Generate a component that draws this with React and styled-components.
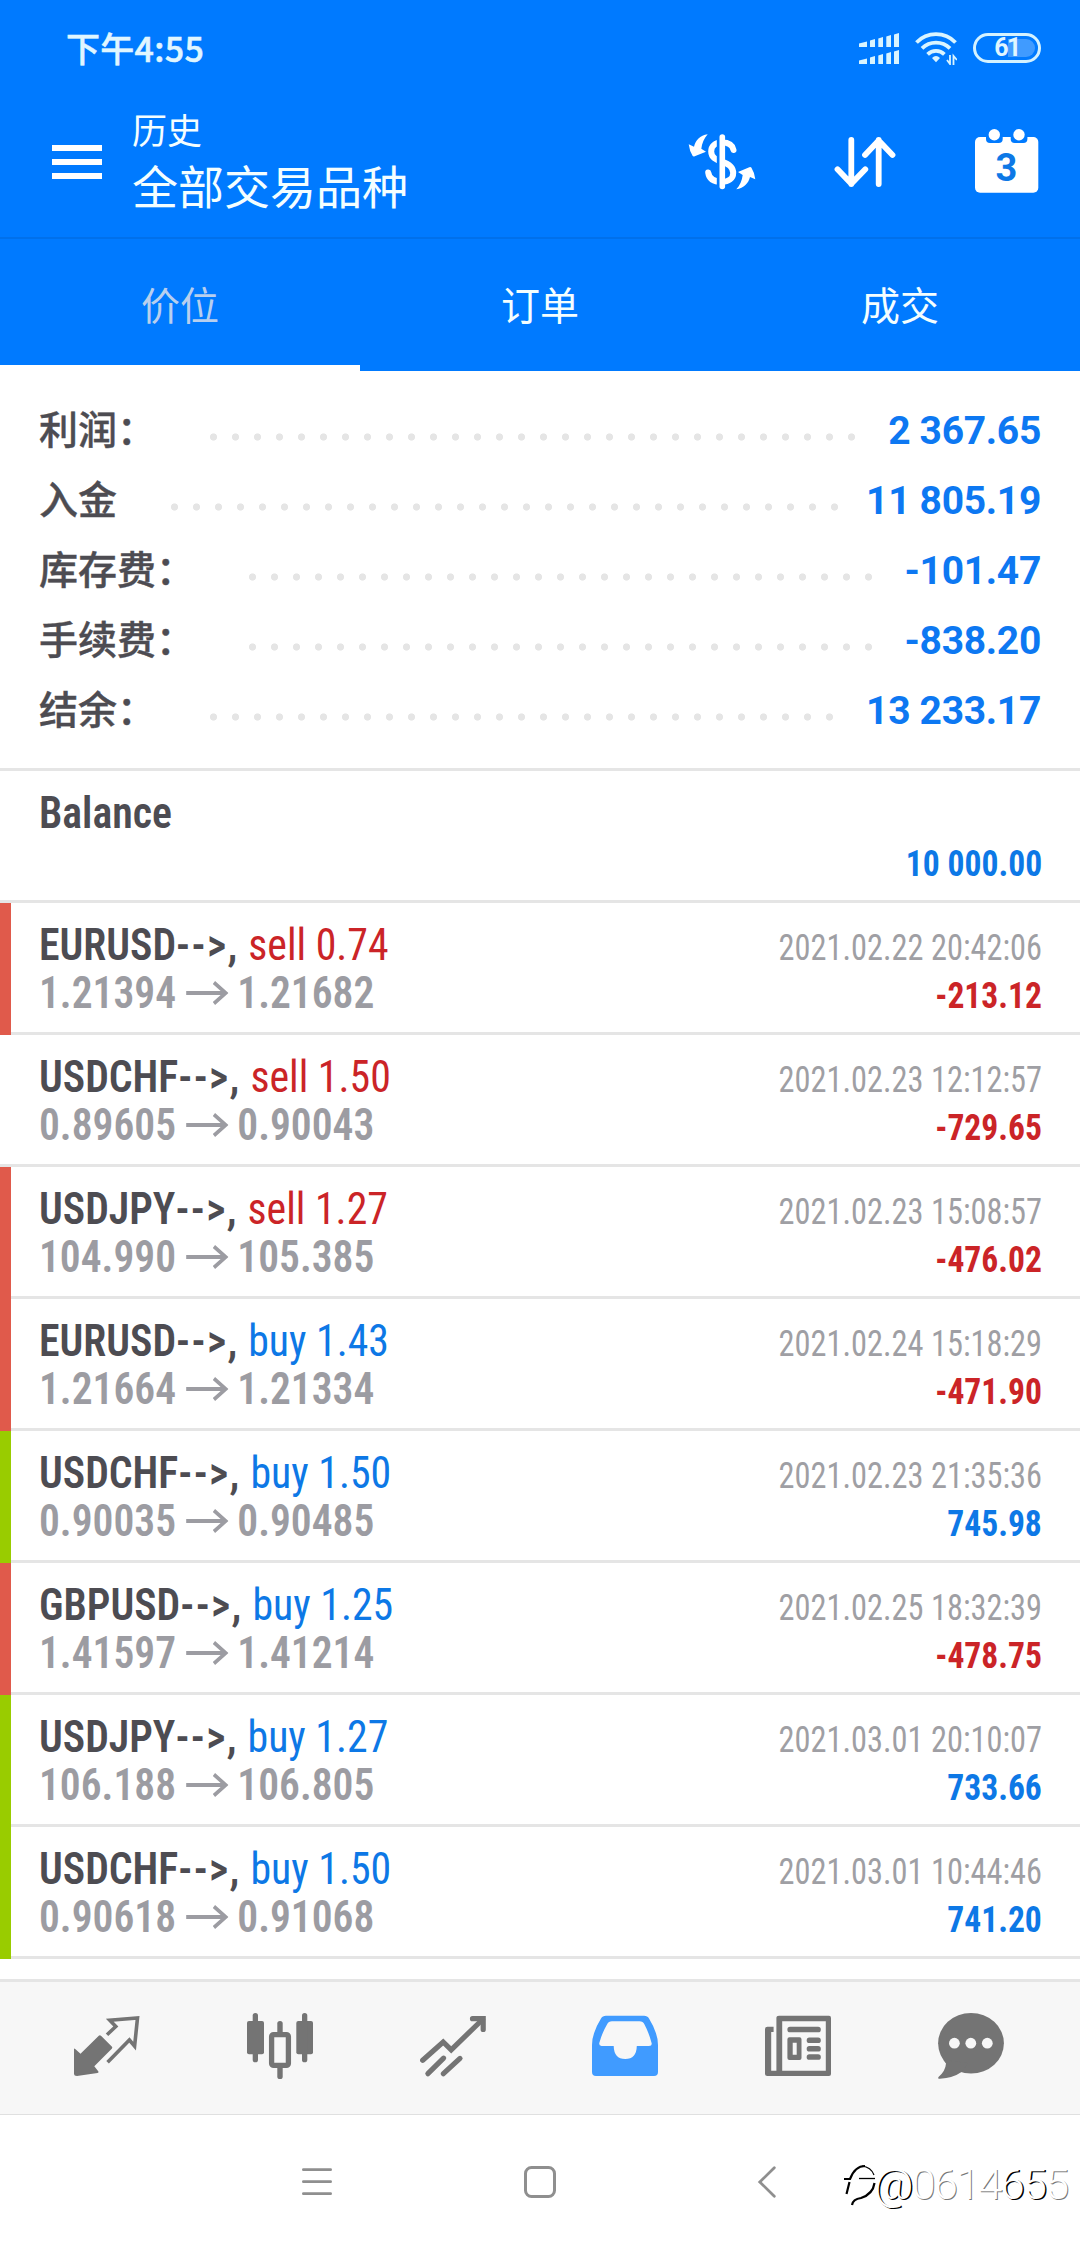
import React from 'react';
import styled, { createGlobalStyle } from 'styled-components';

const GlobalStyle = createGlobalStyle`
  * {
    box-sizing: border-box;
  }

  body {
    margin: 0;
    background: #fff;
    font-family: Roboto, 'Noto Sans CJK SC', sans-serif;
  }

  svg {
    display: block;
    flex-shrink: 0;
  }
`;

const Screen = styled.div`
  position: relative;
  display: flex;
  flex-direction: column;
  width: 1080px;
  height: 2244px;
  overflow: hidden;
  background: #fff;
`;

const StatusBar = styled.div`
  display: flex;
  align-items: center;
  height: 96px;
  padding: 0 39px 0 66px;
  background: #007aff;
`;

const Clock = styled.span`
  flex: 1;
  font: 500 34px/40px 'Noto Sans CJK SC', sans-serif;
  letter-spacing: 0.3px;
  color: #e0f6ff;
  -webkit-text-stroke: 0.5px #e0f6ff;
`;

const StatusIcons = styled.div`
  display: flex;
  align-items: center;
  gap: 16px;
`;

const Battery = styled.div`
  display: flex;
  align-items: center;
  justify-content: center;
  width: 68px;
  height: 30px;
  border: 3px solid #d4f2ff;
  border-radius: 15px;
  background: linear-gradient(90deg, transparent 52%, #409bff 52%) content-box;
  padding: 3px;
  overflow: hidden;
  font: 700 25px/24px Roboto, sans-serif;
  letter-spacing: -1.5px;
  color: #e0f6ff;
`;

const TitleBar = styled.header`
  display: flex;
  align-items: center;
  height: 143px;
  padding: 0 38px 14px 52px;
  border-bottom: 2px solid #0070eb;
  background: #007aff;
`;

const Titles = styled.div`
  flex: 1;
  padding: 2px 0 0 30px;
  font-family: 'Noto Sans CJK SC', sans-serif;
  color: #f4feff;
`;

const Caption = styled.div`
  font-size: 35px;
  line-height: 48px;
`;

const Title = styled.div`
  font-size: 46px;
  line-height: 63px;
`;

const Actions = styled.div`
  display: flex;
  gap: 71px;
`;

const Tabs = styled.nav`
  display: grid;
  grid-template-columns: repeat(3, 1fr);
  height: 132px;
  background: #007aff;
`;

const Tab = styled.div`
  display: flex;
  align-items: center;
  justify-content: center;
  border-bottom: 6px solid ${p => (p.$active ? '#fff' : '#007aff')};
  padding-top: 2px;
  font: 400 39px/56px 'Noto Sans CJK SC', sans-serif;
  color: ${p => (p.$active ? '#b8cfee' : '#f4feff')};
`;

const Summary = styled.section`
  height: 400px;
  padding: 23px 39px 0;
  border-bottom: 3px solid #e5e5e5;
`;

const SummaryRow = styled.div`
  display: flex;
  align-items: center;
  height: 70px;
`;

const SummaryLabel = styled.span`
  padding-bottom: 4px;
  font: 500 39px/56px 'Noto Sans CJK SC', sans-serif;
  color: #4d4c52;
  -webkit-text-stroke: 0.4px #4d4c52;
`;

const Dots = styled.span`
  width: ${p => p.$count * 22}px;
  height: 8px;
  margin: 16px 0 0 54px;
  background: radial-gradient(circle at 3.5px 4px, #e5e5e5 3.2px, transparent 4px) 0 0 / 22px 8px repeat-x;
`;

const SummaryValue = styled.span`
  margin-left: auto;
  padding-top: 3px;
  font: 700 39px/56px Roboto, sans-serif;
  letter-spacing: -0.3px;
  color: #0d78f2;
`;

const Deal = styled.article`
  display: flex;
  justify-content: space-between;
  height: 132px;
  padding: 18px 38px 0 28px;
  border-left: 11px solid ${p => p.$strip || 'transparent'};
  background: linear-gradient(#e5e5e5, #e5e5e5) 0 100% / 100% 3px no-repeat border-box;
  font-family: 'Roboto Condensed', Roboto, sans-serif;
  font-stretch: condensed;
  line-height: 48px;
  white-space: nowrap;
`;

const Column = styled.div`
  display: flex;
  flex-direction: column;
  align-items: ${p => (p.$right ? 'flex-end' : 'flex-start')};
  padding-top: ${p => (p.$right ? '3px' : 0)};
`;

const Symbol = styled.div`
  font-size: 44px;
  font-weight: 600;
  color: #4d4c52;
  transform: scaleX(0.95);
  transform-origin: left;
`;

const Suffix = styled.span`
  letter-spacing: 1.5px;
`;

const Action = styled.span`
  font-weight: 400;
  color: ${p => (p.$sell ? '#cb2427' : '#0d78e6')};
`;

const Prices = styled.div`
  display: flex;
  align-items: center;
  font-size: 44px;
  font-weight: 600;
  color: #9c9ca2;
  transform: scaleX(0.943);
  transform-origin: left;

  svg {
    margin: 0 9px 0 11px;
  }
`;

const DateTime = styled.div`
  min-height: 48px;
  font-size: 36.5px;
  font-weight: 400;
  color: #9f9fa4;
  transform: scaleX(0.887);
  transform-origin: right;
`;

const Profit = styled.div`
  font-size: 36.5px;
  font-weight: 700;
  color: ${p => (p.$loss ? '#cb2427' : '#0d78e6')};
  transform: scaleX(0.92);
  transform-origin: right;
`;

const NavBar = styled.nav`
  display: flex;
  justify-content: space-around;
  height: 136px;
  margin-top: 20px;
  padding: 31px 23px 0 21px;
  border-top: 3px solid #e5e5e5;
  border-bottom: 1px solid #e0e0e0;
  background: #f7f7f7;
  color: #747474;
`;

const SystemBar = styled.div`
  display: flex;
  align-items: center;
  gap: 191px;
  flex: 1;
  padding: 5px 0 0 301px;
  color: #8f8f8f;
`;

const Watermark = styled.div`
  position: absolute;
  left: 843px;
  top: 2158px;
  display: flex;
  align-items: center;
  font: 300 43px/52px Roboto, sans-serif;
  letter-spacing: -1.6px;
  color: #fff;

  svg {
    margin-right: -6px;
  }
`;

const Mark = styled.span`
  text-shadow: ${p => (p.$dark ? '1.5px 1px 0.5px #000' : '1px 1px 0.5px #777')};
`;

const MenuIcon = () => (
  <svg width="50" height="38" viewBox="0 -4 50 38" fill="#fff">
    <rect width="50" height="6" />
    <rect y="14" width="50" height="6" />
    <rect y="28" width="50" height="6" />
  </svg>
);

const SignalIcon = () => (
  <svg width="40" height="31" viewBox="0 0 40 31" fill="#d9f4ff">
    {[0, 17].map(y => (
      <path
        key={y}
        transform={`translate(0 ${y})`}
        d="M0 10.5L8 8.5V14H0ZM11 7.5L16 6V14H11ZM19.3 5.5L24 4V14H19.3ZM27.3 3.5L32 2V14H27.3ZM35 1.5L40 0V14H35Z"
      />
    ))}
  </svg>
);

const WifiIcon = () => (
  <svg width="42" height="33" viewBox="0 0 42 33" fill="none" stroke="#d9f4ff" strokeWidth="3.8">
    <path d="M1.5 10.5A27 27 0 0 1 40.5 10.5" />
    <path d="M7 16.3A20 20 0 0 1 35 16.3" />
    <path d="M12.6 22.3A12 12 0 0 1 29.4 22.3" />
    <path d="M17 26Q21 22 25 26L21 30.3Z" fill="#d9f4ff" stroke="none" />
    <path d="M35 23V32L32 28M38.5 33V24L42 28" strokeWidth="1.8" />
  </svg>
);

const DollarIcon = () => (
  <svg width="72" height="72" viewBox="0 0 72 72" fill="#fff">
    <path
      d="M49.5 26C48.5 21 44 18.6 38 18.6C31 18.6 27.2 22 27.2 27.5C27.2 33.5 32 35.7 38 37.7C46 40.3 49.2 43.5 49.2 49C49.2 54.5 44.5 57.8 38 57.8C30 57.8 25 54.5 24.2 48.5"
      fill="none"
      stroke="#fff"
      strokeWidth="6"
      strokeLinecap="round"
    />
    <path d="M32.8 12H36V64H32.8Z" fill="#007aff" />
    <rect x="35.5" y="10.3" width="5.6" height="55" rx="2.8" />
    <path d="M23.7 10.3C16 11.5 11.5 16.5 10 22.7L4.7 20.3Q5.5 27 8.7 32Q9.3 32.8 10.7 32.3L22 27.7L17.3 24.7C18 19.3 20 14.3 23.7 10.3Z" />
    <path
      d="M23.7 10.3C16 11.5 11.5 16.5 10 22.7L4.7 20.3Q5.5 27 8.7 32Q9.3 32.8 10.7 32.3L22 27.7L17.3 24.7C18 19.3 20 14.3 23.7 10.3Z"
      transform="rotate(180 38 37.8)"
    />
  </svg>
);

const SortIcon = () => (
  <svg width="72" height="72" viewBox="0 0 72 72" fill="none" stroke="#fff" strokeWidth="5.8" strokeLinecap="round" strokeLinejoin="round">
    <path d="M24.3 16V60M10.5 45.3L24.3 59.7L38.3 45.3" />
    <path d="M51.7 60V16M38 31L51.7 16.5L65.5 31" />
  </svg>
);

const CalendarIcon = () => (
  <svg width="72" height="72" viewBox="0 0 72 72" fill="#fff">
    <rect x="5" y="13" width="63.3" height="55.7" rx="5" />
    <rect x="16" y="3" width="16.7" height="16" rx="4" fill="#007aff" />
    <rect x="40.7" y="3" width="16.7" height="16" rx="4" fill="#007aff" />
    <circle cx="24.3" cy="10.7" r="5.7" />
    <circle cx="49" cy="10.7" r="5.7" />
    <text x="36.5" y="57" textAnchor="middle" fontFamily="Roboto" fontWeight="700" fontSize="38" fill="#0d78e6">3</text>
  </svg>
);

const PriceArrow = () => (
  <svg width="45" height="24" viewBox="0 0 45 24" fill="none" stroke="currentColor" strokeWidth="3.8">
    <path d="M0 12H41M29.5 1.5L42 12L29.5 22.5" />
  </svg>
);

const QuotesIcon = () => (
  <svg width="66" height="66" viewBox="0 0 66 66" fill="currentColor">
    <path d="M0 36.5Q0 35 1.2 36L6.5 40.7L24.8 22.8Q25.8 21.6 27 22.8L38 33.8Q38.6 34.6 38 35.4L20.3 53.3L24.4 58.5Q25 59.6 23.5 60L3 63Q0 63 0 60.5Z" />
    <path d="M33 21.7L41.8 13.5L35.8 7.3L63.5 5L60.6 33.2L55.4 27L33.6 49.2" fill="none" stroke="currentColor" strokeWidth="3.6" />
  </svg>
);

const CandlesIcon = () => (
  <svg width="66" height="66" viewBox="0 0 66 66" fill="currentColor">
    <rect y="8" width="17" height="33.3" rx="2" />
    <rect x="5.7" width="5.3" height="49.3" rx="2.6" />
    <rect x="49.3" y="8" width="16.7" height="33.3" rx="2" />
    <rect x="55" width="5.3" height="49.3" rx="2.6" />
    <rect x="30.3" y="8" width="5.4" height="14" rx="2.6" />
    <rect x="30.3" y="52" width="5.4" height="14" rx="2.6" />
    <rect x="24.6" y="21.6" width="16.8" height="30.8" rx="2" fill="#f7f7f7" stroke="currentColor" strokeWidth="5.3" />
  </svg>
);

const TradeIcon = () => (
  <svg width="66" height="66" viewBox="0 0 66 66" fill="none" stroke="currentColor" strokeWidth="5.2" strokeLinecap="round">
    <path d="M2.7 47.3L23.2 29L31.2 36.8L62.5 6.5" />
    <path d="M52.5 5.7H63.2V16.5" />
    <path d="M7.9 60.7L23.6 45.2M23.4 60.7L40 45.4" />
  </svg>
);

const InboxIcon = () => (
  <svg width="66" height="66" viewBox="0 0 66 66" fill="#409bff">
    <path
      fillRule="evenodd"
      d="M14 2.7H52Q55.5 2.7 57 5.5Q66 20 66 32V59Q66 63 62 63H4Q0 63 0 59V32Q0 20 9 5.5Q10.5 2.7 14 2.7ZM20 8.3Q16.5 8.3 15 11.5Q10 20 7.3 30Q6.8 33 9.5 33H21.7Q22 46 33.2 46Q44.5 46 44.8 33H57Q60.3 33 59.6 30Q57 20 52.5 11.5Q51 8.3 47.5 8.3Z"
    />
  </svg>
);

const NewsIcon = () => (
  <svg width="66" height="66" viewBox="0 0 66 66" fill="currentColor">
    <path fillRule="evenodd" d="M14 2.7H64Q66 2.7 66 5V61Q66 63 64 63H2.5Q0 63 0 60.5V16Q0 13.7 2.5 13.7H8.6V19H6.2V57.7H11.4V5Q11.4 2.7 14 2.7ZM17.2 8.2V57.7H60.8V8.2Z" />
    <rect x="22.4" y="13.7" width="33.4" height="5.6" rx="2.6" />
    <path fillRule="evenodd" d="M24.4 24.3H34.5Q36.5 24.3 36.5 26.3V45Q36.5 47 34.5 47H24.4Q22.4 47 22.4 45V26.3Q22.4 24.3 24.4 24.3ZM27.7 29.7V41.7H31.7V29.7Z" />
    <rect x="41.7" y="24.6" width="14.1" height="5.5" rx="2.6" />
    <rect x="41.7" y="33" width="14.1" height="5.5" rx="2.6" />
    <rect x="41.7" y="41.3" width="14.1" height="5.5" rx="2.6" />
  </svg>
);

const ChatIcon = () => (
  <svg width="66" height="66" viewBox="0 0 66 66" fill="currentColor">
    <ellipse cx="33" cy="30.3" rx="32.9" ry="30.3" />
    <path d="M5.5 47L8 50.5Q7.5 58 0.5 64Q-0.5 66 2 65.8Q15 65 23.5 59L30 50Z" />
    <g fill="#f7f7f7">
      <circle cx="16.4" cy="30.2" r="5.4" />
      <circle cx="32.8" cy="30.2" r="5.4" />
      <circle cx="49.3" cy="30.2" r="5.4" />
    </g>
  </svg>
);

const summary = [
  { label: '利润：', dots: 30, value: '2 367.65' },
  { label: '入金', dots: 31, value: '11 805.19' },
  { label: '库存费：', dots: 29, value: '-101.47' },
  { label: '手续费：', dots: 29, value: '-838.20' },
  { label: '结余：', dots: 29, value: '13 233.17' },
];

const RED = '#e05a4b';
const GREEN = '#99cc00';

const deals = [
  { symbol: 'EURUSD', action: 'sell 0.74', from: '1.21394', to: '1.21682', time: '2021.02.22 20:42:06', profit: '-213.12', strip: RED },
  { symbol: 'USDCHF', action: 'sell 1.50', from: '0.89605', to: '0.90043', time: '2021.02.23 12:12:57', profit: '-729.65' },
  { symbol: 'USDJPY', action: 'sell 1.27', from: '104.990', to: '105.385', time: '2021.02.23 15:08:57', profit: '-476.02', strip: RED },
  { symbol: 'EURUSD', action: 'buy 1.43', from: '1.21664', to: '1.21334', time: '2021.02.24 15:18:29', profit: '-471.90', strip: RED },
  { symbol: 'USDCHF', action: 'buy 1.50', from: '0.90035', to: '0.90485', time: '2021.02.23 21:35:36', profit: '745.98', strip: GREEN },
  { symbol: 'GBPUSD', action: 'buy 1.25', from: '1.41597', to: '1.41214', time: '2021.02.25 18:32:39', profit: '-478.75', strip: RED },
  { symbol: 'USDJPY', action: 'buy 1.27', from: '106.188', to: '106.805', time: '2021.03.01 20:10:07', profit: '733.66', strip: GREEN },
  { symbol: 'USDCHF', action: 'buy 1.50', from: '0.90618', to: '0.91068', time: '2021.03.01 10:44:46', profit: '741.20', strip: GREEN },
];

const App = () => {
  return (
    <Screen>
      <GlobalStyle />
      <StatusBar>
        <Clock>下午4:55</Clock>
        <StatusIcons>
          <SignalIcon />
          <WifiIcon />
          <Battery>61</Battery>
        </StatusIcons>
      </StatusBar>

      <TitleBar>
        <MenuIcon />
        <Titles>
          <Caption>历史</Caption>
          <Title>全部交易品种</Title>
        </Titles>
        <Actions>
          <DollarIcon />
          <SortIcon />
          <CalendarIcon />
        </Actions>
      </TitleBar>

      <Tabs>
        <Tab $active>价位</Tab>
        <Tab>订单</Tab>
        <Tab>成交</Tab>
      </Tabs>

      <Summary>
        {summary.map(row => (
          <SummaryRow key={row.label}>
            <SummaryLabel>{row.label}</SummaryLabel>
            <Dots $count={row.dots} />
            <SummaryValue>{row.value}</SummaryValue>
          </SummaryRow>
        ))}
      </Summary>

      <Deal>
        <Column>
          <Symbol>Balance</Symbol>
        </Column>
        <Column $right>
          <DateTime />
          <Profit>10 000.00</Profit>
        </Column>
      </Deal>
      {deals.map(deal => (
        <Deal key={deal.time} $strip={deal.strip}>
          <Column>
            <Symbol>
              {deal.symbol}
              <Suffix>--&gt;,</Suffix> <Action $sell={deal.action.startsWith('sell')}>{deal.action}</Action>
            </Symbol>
            <Prices>
              {deal.from}
              <PriceArrow />
              {deal.to}
            </Prices>
          </Column>
          <Column $right>
            <DateTime>{deal.time}</DateTime>
            <Profit $loss={deal.profit.startsWith('-')}>{deal.profit}</Profit>
          </Column>
        </Deal>
      ))}

      <NavBar>
        <QuotesIcon />
        <CandlesIcon />
        <TradeIcon />
        <InboxIcon />
        <NewsIcon />
        <ChatIcon />
      </NavBar>

      <SystemBar>
        <svg width="32" height="32" viewBox="0 0 32 32" fill="none" stroke="currentColor" strokeWidth="2.8" strokeLinecap="round">
          <path d="M2.4 3.7H29.6M2.4 15.7H29.6M2.4 27.7H29.6" />
        </svg>
        <svg width="32" height="32" viewBox="0 0 32 32" fill="none" stroke="currentColor" strokeWidth="3">
          <rect x="1.5" y="1.5" width="29" height="29" rx="6" />
        </svg>
        <svg width="32" height="32" viewBox="0 0 32 32" fill="none" stroke="currentColor" strokeWidth="2.8" strokeLinecap="round">
          <path d="M27.3 1.8L12.8 16L27.3 30.2" />
        </svg>
      </SystemBar>

      <Watermark>
        <svg width="37" height="44" viewBox="0 0 37 44" fill="none" stroke="#000" strokeWidth="2.2">
          <path d="M1 17H7Q12 4 22 4" />
          <path d="M19 4Q28 5 31 13" strokeWidth="1.2" />
          <path d="M16 16.5H32" strokeWidth="1.3" />
          <path d="M6.5 20L3.5 32" />
          <path d="M31.5 21Q30 32 18 36Q10 37 9 43" />
        </svg>
        <Mark $dark>@</Mark>
        <Mark>0614</Mark>
        <Mark $dark>65</Mark>
        <Mark>5</Mark>
      </Watermark>
    </Screen>
  );
};

export default App;
